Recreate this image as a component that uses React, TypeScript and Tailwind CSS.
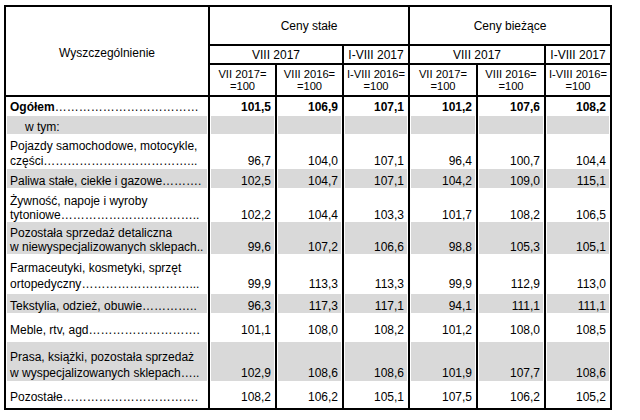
import React from 'react';

// Wiersz tabeli: etykieta (linie), kropki prowadzące, wartości i parametry wysokości
type Row = {
  label: string[];
  dots?: string;
  values: string[];
  h: number; // wysokość wiersza w px
  pb: number; // odstęp od dołu ostatniej linii
  lh?: number; // interlinia
  gray?: boolean;
  bold?: boolean;
  indent?: boolean;
};

const E = (n: number, p = 0) => '…'.repeat(n) + '.'.repeat(p);

const rows: Row[] = [
  { label: ['Ogółem'], dots: E(12), values: ['101,5', '106,9', '107,1', '101,2', '107,6', '108,2'], h: 19, pb: 2, bold: true },
  { label: ['w tym:'], values: ['', '', '', '', '', ''], h: 22, pb: 4, gray: true, indent: true },
  { label: ['Pojazdy samochodowe, motocykle,', 'części'], dots: E(12, 3), values: ['96,7', '104,0', '107,1', '96,4', '100,7', '104,4'], h: 31, pb: 0, lh: 15 },
  { label: ['Paliwa stałe, ciekłe i gazowe'], dots: E(3, 1), values: ['102,5', '104,7', '107,1', '104,2', '109,0', '115,1'], h: 25, pb: 6, gray: true },
  { label: ['Żywność, napoje i wyroby', 'tytoniowe'], dots: E(11, 2), values: ['102,2', '104,4', '103,3', '101,7', '108,2', '106,5'], h: 28, pb: 0, lh: 14 },
  { label: ['Pozostała sprzedaż detaliczna', 'w niewyspecjalizowanych sklepach'], dots: '..', values: ['99,6', '107,2', '106,6', '98,8', '105,3', '105,1'], h: 33, pb: 1, lh: 14, gray: true },
  { label: ['Farmaceutyki, kosmetyki, sprzęt', 'ortopedyczny'], dots: E(9, 3), values: ['99,9', '113,3', '113,3', '99,9', '112,9', '113,0'], h: 39, pb: 2, lh: 16 },
  { label: ['Tekstylia, odzież, obuwie'], dots: E(4, 2), values: ['96,3', '117,3', '117,1', '94,1', '111,1', '111,1'], h: 26, pb: 7, gray: true },
  { label: ['Meble, rtv, agd'], dots: E(9, 1), values: ['101,1', '108,0', '108,2', '101,2', '108,0', '108,5'], h: 22, pb: 5 },
  { label: ['Prasa, książki, pozostała sprzedaż', 'w wyspecjalizowanych sklepach'], dots: E(1, 2), values: ['102,9', '108,6', '108,6', '101,9', '107,7', '108,6'], h: 48, pb: 9, lh: 16, gray: true },
  { label: ['Pozostałe'], dots: E(11, 1), values: ['108,2', '106,2', '105,1', '107,5', '106,2', '105,2'], h: 18, pb: 4 },
];

const grid = 'grid grid-cols-[202px_67px_67px_66px_68px_68px_66px]';

function SubHead({ top, bottom }: { top: string; bottom: string }) {
  return (
    <div className="border-l-2 border-t-2 border-black flex flex-col items-center justify-center text-[11.2px] leading-[11.5px] pt-[1px] whitespace-nowrap">
      <span>{top}</span>
      <span>{bottom}</span>
    </div>
  );
}

function BodyRow({ row }: { row: Row }) {
  const lh = row.lh ?? 14;
  const bg = row.gray ? 'bg-[#d9d9d9]' : 'bg-white';

  return (
    <div className={grid} style={{ height: row.h }}>
      {/* Etykieta */}
      <div
        className={`flex flex-col justify-end px-[1px] bg-clip-content ${bg}`}
        style={{ paddingBottom: row.pb, lineHeight: `${lh}px` }}
      >
        <div className={row.indent ? 'pl-[18px]' : 'pl-[3px]'}>
          {row.label.map((line, i) => {
            const last = i === row.label.length - 1;
            return (
              <div key={i} className="whitespace-nowrap">
                <span className={row.bold ? 'font-bold' : ''}>{line}</span>
                {last && row.dots && <span>{row.dots}</span>}
              </div>
            );
          })}
        </div>
      </div>

      {/* Wartości */}
      {row.values.map((v, i) => (
        <div
          key={i}
          className={`border-l-2 border-black flex flex-col justify-end items-end px-[1px] bg-clip-content ${bg}`}
          style={{ paddingBottom: row.pb, lineHeight: `${lh}px` }}
        >
          <span className={`pr-[3px] ${row.bold ? 'font-bold' : ''}`}>{v}</span>
        </div>
      ))}
    </div>
  );
}

export default function App() {
  return (
    <div className="w-[640px] h-[420px] bg-white overflow-hidden font-['Liberation_Sans',Arial,sans-serif] text-[12px] text-black">
      <div className="ml-[4px] mt-[5px] w-[608px] border-2 border-black">
        {/* Nagłówek */}
        <div className={`${grid} grid-rows-[37px_19px_32px] border-b-2 border-black`}>
          <div className="row-span-3 flex items-center justify-center pt-[3px]">Wyszczególnienie</div>
          <div className="col-span-3 border-l-2 border-black flex items-center justify-center">Ceny stałe</div>
          <div className="col-span-3 border-l-2 border-black flex items-center justify-center">Ceny bieżące</div>

          <div className="col-span-2 border-l-2 border-t-2 border-black flex items-center justify-center">VIII 2017</div>
          <div className="border-l-2 border-t-2 border-black flex items-center justify-center">I-VIII 2017</div>
          <div className="col-span-2 border-l-2 border-t-2 border-black flex items-center justify-center">VIII 2017</div>
          <div className="border-l-2 border-t-2 border-black flex items-center justify-center">I-VIII 2017</div>

          <SubHead top="VII 2017=" bottom="=100" />
          <SubHead top="VIII 2016=" bottom="=100" />
          <SubHead top="I-VIII 2016=" bottom="=100" />
          <SubHead top="VII 2017=" bottom="=100" />
          <SubHead top="VIII 2016=" bottom="=100" />
          <SubHead top="I-VIII 2016=" bottom="=100" />
        </div>

        {/* Dane */}
        {rows.map((row, i) => (
          <BodyRow key={i} row={row} />
        ))}
      </div>
    </div>
  );
}
